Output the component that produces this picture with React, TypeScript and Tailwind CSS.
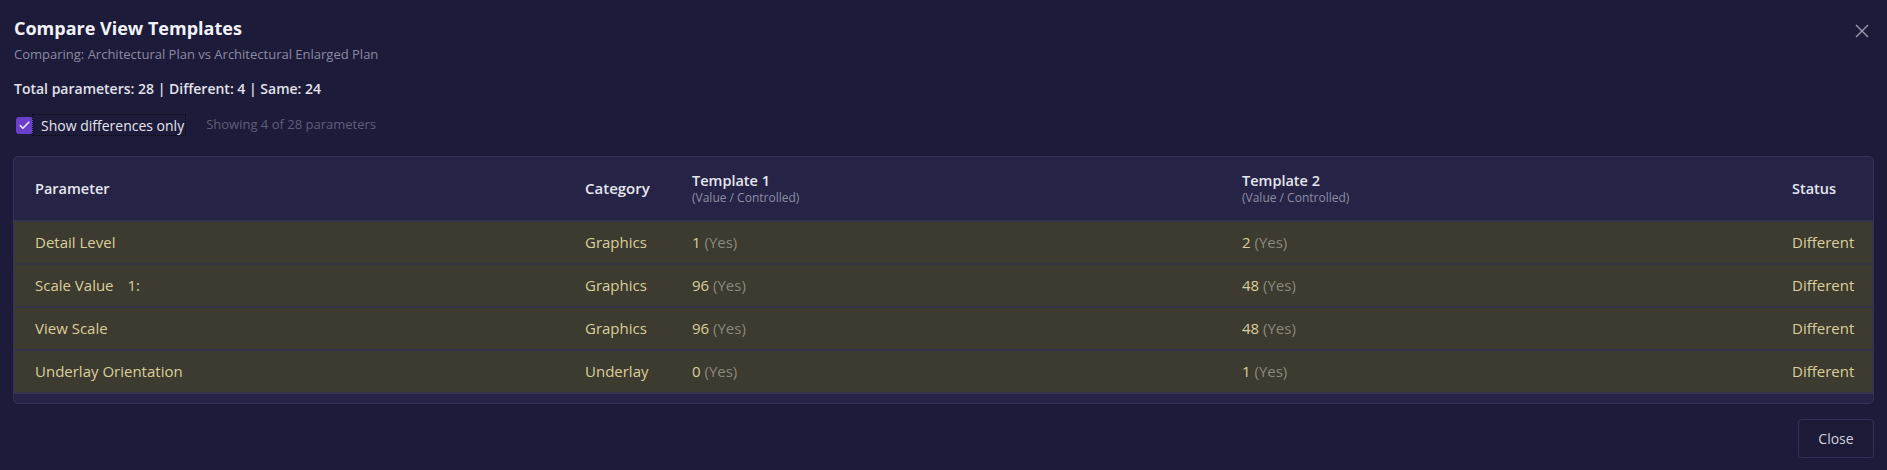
import { Check } from "lucide-react";

const rows = [
  { name: "Detail Level", extra: "", category: "Graphics", v1: "1", v2: "2" },
  { name: "Scale Value", extra: "1:", category: "Graphics", v1: "96", v2: "48" },
  { name: "View Scale", extra: "", category: "Graphics", v1: "96", v2: "48" },
  { name: "Underlay Orientation", extra: "", category: "Underlay", v1: "0", v2: "1" },
];

const cols = "grid grid-cols-[550px_107px_550px_550px_1fr]";

export default function App() {
  return (
    <div
      className="w-[1887px] h-[470px] bg-[#1c1b3a] text-white overflow-hidden flex flex-col px-[13px] pt-[14px]"
      style={{ fontFamily: "'Open Sans', 'Noto Sans', sans-serif" }}
    >
      {/* Header */}
      <div className="flex items-start justify-between">
        <div className="pl-px">
          <h2 className="text-[18px] leading-[28px] font-bold text-[#f2f2f6]">Compare View Templates</h2>
          <p className="mt-[2px] text-[13px] leading-[20px] text-[#8b8aa2]">
            Comparing: Architectural Plan vs Architectural Enlarged Plan
          </p>
        </div>
        <button className="mt-[10px] mr-[5px] text-[#9d9cae]" aria-label="Close">
          <svg width="14" height="14" viewBox="0 0 14 14" fill="none" stroke="currentColor" strokeWidth="1.4">
            <path d="M1 1L13 13M13 1L1 13" />
          </svg>
        </button>
      </div>

      <div className="mt-[15px] pl-px text-[14px] leading-[20px] font-semibold text-[#e2e2ea]">
        Total parameters: 28 | Different: 4 | Same: 24
      </div>

      {/* Filter */}
      <div className="mt-[15px] flex items-center h-[22px] pl-[3px]">
        <div className="w-[17px] h-[17px] rounded-[3px] bg-[#6b3fcb] flex items-center justify-center">
          <Check size={13} strokeWidth={3} className="text-[#ece8f8]" />
        </div>
        <span className="ml-[-1px] pl-[8px] pr-[1px] h-[22px] flex items-center border border-dotted border-[#0b0b14] text-[14px] text-[#e6e6ee]">
          Show differences only
        </span>
        <span className="ml-[20px] text-[13px] text-[#5f5e78]">Showing 4 of 28 parameters</span>
      </div>

      {/* Table */}
      <div className="mt-[20px] border border-[#33325a] rounded-[5px] bg-[#252446] overflow-hidden">
        <div className={`${cols} h-[63px] items-center text-[14.5px] font-semibold text-[#e6e6ee]`}>
          <div className="pl-[21px]">Parameter</div>
          <div className="pl-[21px] text-[15px]">Category</div>
          <div className="pl-[21px] leading-[17px]">
            <div>Template 1</div>
            <div className="text-[12px] font-normal text-[#8e8da4]">(Value / Controlled)</div>
          </div>
          <div className="pl-[21px] leading-[17px]">
            <div>Template 2</div>
            <div className="text-[12px] font-normal text-[#8e8da4]">(Value / Controlled)</div>
          </div>
          <div className="pl-[21px]">Status</div>
        </div>

        {rows.map((r) => (
          <div
            key={r.name}
            className={`${cols} h-[43px] items-center border-t-2 border-[#35344f] bg-[#3d3a2f] text-[15px] text-[#d9cf9b]`}
          >
            <div className="pl-[21px]">
              {r.name}
              {r.extra && <span className="ml-[14px]">{r.extra}</span>}
            </div>
            <div className="pl-[21px]">{r.category}</div>
            <div className="pl-[21px]">
              {r.v1} <span className="text-[#8c897c]">(Yes)</span>
            </div>
            <div className="pl-[21px]">
              {r.v2} <span className="text-[#8c897c]">(Yes)</span>
            </div>
            <div className="pl-[21px]">Different</div>
          </div>
        ))}
        <div className="h-[11px] border-t-2 border-[#35344f]" />
      </div>

      {/* Footer */}
      <div className="mt-[15px] flex justify-end">
        <button className="w-[76px] h-[39px] rounded-[4px] border border-[#33325a] bg-[#1b1a37] text-[14px] text-[#d2d2de]">
          Close
        </button>
      </div>
    </div>
  );
}
